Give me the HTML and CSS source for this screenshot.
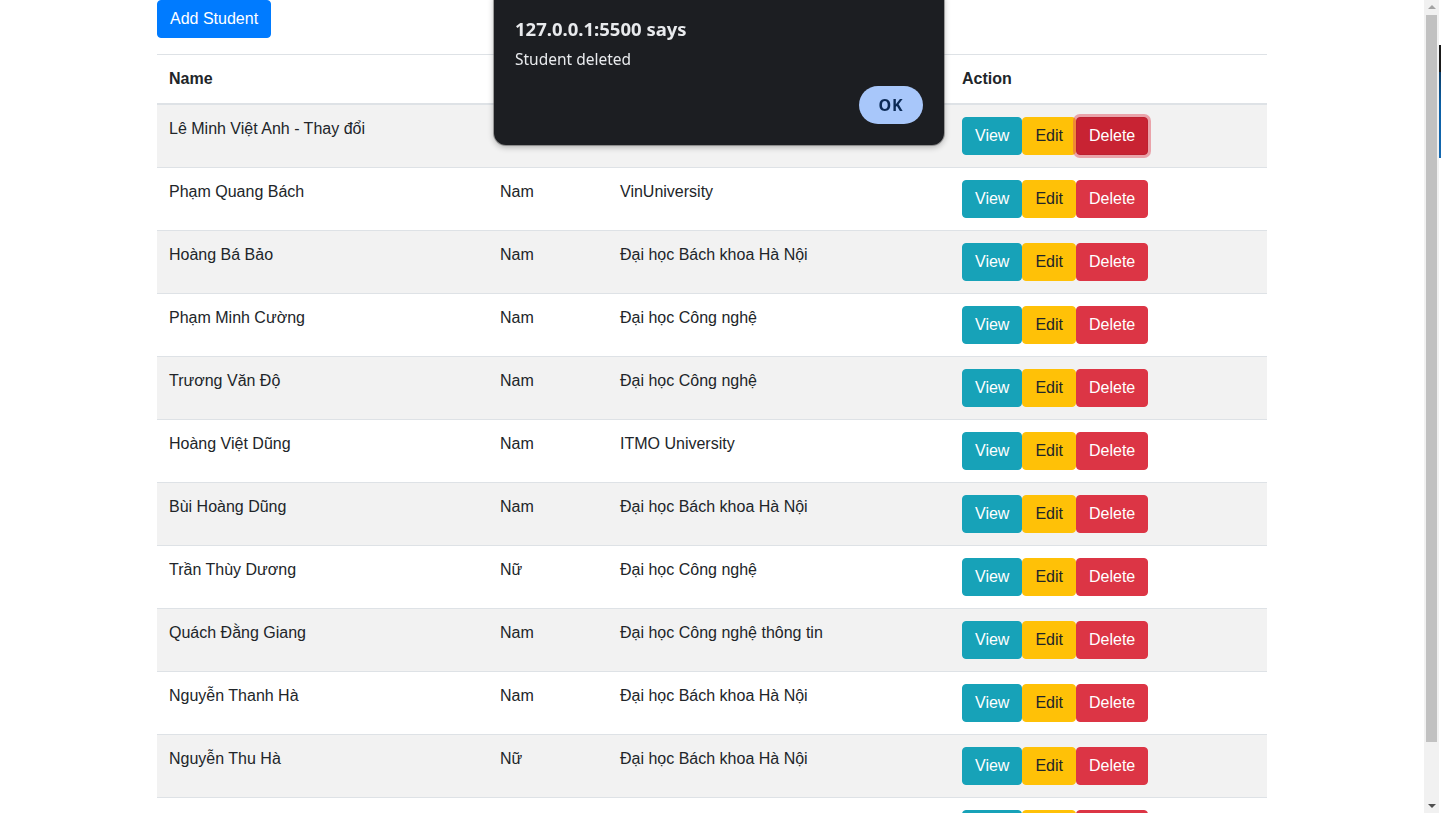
FILE: index.html
```html
<!DOCTYPE html>
<html lang="vi">
<head>
<meta charset="utf-8">
<title>Students</title>
<link rel="stylesheet" href="styles.css">
</head>
<body>
<div class="viewport">
  <main class="page">
    <div class="container">
      <button class="btn btn-primary add-btn">Add Student</button>
      <table class="table">
        <colgroup>
          <col class="c-name"><col class="c-gender"><col class="c-uni"><col class="c-action">
        </colgroup>
        <thead>
          <tr><th>Name</th><th>Gender</th><th>University</th><th>Action</th></tr>
        </thead>
        <tbody>
          <tr><td>Lê Minh Việt Anh - Thay đổi</td><td>Nam</td><td>Đại học Công nghệ</td><td><div class="actions"><button class="btn btn-info">View</button><button class="btn btn-warning">Edit</button><button class="btn btn-danger focused">Delete</button></div></td></tr>
          <tr><td>Phạm Quang Bách</td><td>Nam</td><td>VinUniversity</td><td><div class="actions"><button class="btn btn-info">View</button><button class="btn btn-warning">Edit</button><button class="btn btn-danger">Delete</button></div></td></tr>
          <tr><td>Hoàng Bá Bảo</td><td>Nam</td><td>Đại học Bách khoa Hà Nội</td><td><div class="actions"><button class="btn btn-info">View</button><button class="btn btn-warning">Edit</button><button class="btn btn-danger">Delete</button></div></td></tr>
          <tr><td>Phạm Minh Cường</td><td>Nam</td><td>Đại học Công nghệ</td><td><div class="actions"><button class="btn btn-info">View</button><button class="btn btn-warning">Edit</button><button class="btn btn-danger">Delete</button></div></td></tr>
          <tr><td>Trương Văn Độ</td><td>Nam</td><td>Đại học Công nghệ</td><td><div class="actions"><button class="btn btn-info">View</button><button class="btn btn-warning">Edit</button><button class="btn btn-danger">Delete</button></div></td></tr>
          <tr><td>Hoàng Việt Dũng</td><td>Nam</td><td>ITMO University</td><td><div class="actions"><button class="btn btn-info">View</button><button class="btn btn-warning">Edit</button><button class="btn btn-danger">Delete</button></div></td></tr>
          <tr><td>Bùi Hoàng Dũng</td><td>Nam</td><td>Đại học Bách khoa Hà Nội</td><td><div class="actions"><button class="btn btn-info">View</button><button class="btn btn-warning">Edit</button><button class="btn btn-danger">Delete</button></div></td></tr>
          <tr><td>Trần Thùy Dương</td><td>Nữ</td><td>Đại học Công nghệ</td><td><div class="actions"><button class="btn btn-info">View</button><button class="btn btn-warning">Edit</button><button class="btn btn-danger">Delete</button></div></td></tr>
          <tr><td>Quách Đằng Giang</td><td>Nam</td><td>Đại học Công nghệ thông tin</td><td><div class="actions"><button class="btn btn-info">View</button><button class="btn btn-warning">Edit</button><button class="btn btn-danger">Delete</button></div></td></tr>
          <tr><td>Nguyễn Thanh Hà</td><td>Nam</td><td>Đại học Bách khoa Hà Nội</td><td><div class="actions"><button class="btn btn-info">View</button><button class="btn btn-warning">Edit</button><button class="btn btn-danger">Delete</button></div></td></tr>
          <tr><td>Nguyễn Thu Hà</td><td>Nữ</td><td>Đại học Bách khoa Hà Nội</td><td><div class="actions"><button class="btn btn-info">View</button><button class="btn btn-warning">Edit</button><button class="btn btn-danger">Delete</button></div></td></tr>
          <tr><td>Lưu Thu Hương</td><td>Nữ</td><td>Đại học Công nghệ</td><td><div class="actions"><button class="btn btn-info">View</button><button class="btn btn-warning">Edit</button><button class="btn btn-danger">Delete</button></div></td></tr>
        </tbody>
      </table>
    </div>
  </main>

  <div class="scrollbar" aria-hidden="true">
    <div class="sb-arrow sb-up"></div>
    <div class="sb-track"><div class="sb-thumb"></div></div>
    <div class="sb-arrow sb-down"></div>
  </div>
  <div class="edge" aria-hidden="true"><div class="edge-win"></div></div>
</div>

<div class="dialog" role="alertdialog">
  <div class="dialog-title">127.0.0.1:5500 says</div>
  <div class="dialog-msg">Student deleted</div>
  <div class="dialog-foot"><button class="dialog-ok">OK</button></div>
</div>
</body>
</html>
```

FILE: styles.css
```css
*, *::before, *::after { box-sizing: border-box; }

html, body { margin: 0; height: 100%; overflow: hidden; }

body {
  font-family: "Liberation Sans", Arial, sans-serif;
  font-size: 16px;
  line-height: 1.5;
  color: #212529;
  background: #fff;
}

.viewport {
  display: flex;
  height: 100vh;
}

.page {
  flex: 1;
  min-width: 0;
  overflow: hidden;
}

.container {
  width: 1140px;
  padding: 0 15px;
  margin: 0 auto;
}

.btn {
  display: inline-block;
  font-family: inherit;
  font-size: 16px;
  line-height: 24px;
  padding: 6px 12px;
  border: 1px solid transparent;
  border-radius: 4px;
  cursor: pointer;
  margin: 0;
}

.btn-primary { background: #007bff; border-color: #007bff; color: #fff; }
.btn-info { background: #17a2b8; border-color: #17a2b8; color: #fff; }
.btn-warning { background: #ffc107; border-color: #ffc107; color: #212529; }
.btn-danger { background: #dc3545; border-color: #dc3545; color: #fff; }
.btn-danger.focused {
  background: #c82333;
  border-color: #bd2130;
  box-shadow: 0 0 0 3px rgba(225, 83, 97, 0.5);
  position: relative;
}

.add-btn { display: block; }

.table {
  width: 100%;
  margin: 16px 0 16px;
  border-collapse: collapse;
  table-layout: fixed;
}

.c-name { width: 331px; }
.c-gender { width: 120px; }
.c-uni { width: 342px; }
.c-action { width: 317px; }

.table th, .table td {
  padding: 12px;
  text-align: left;
  vertical-align: top;
  border-top: 1px solid #dee2e6;
}

.table thead th {
  font-weight: 700;
  vertical-align: bottom;
  border-bottom: 2px solid #dee2e6;
}

.table tbody tr:nth-child(odd) { background: #f2f2f2; }

.actions { display: flex; }

/* classic scrollbar drawn beside the page */
.scrollbar {
  width: 15px;
  flex: none;
  display: flex;
  flex-direction: column;
  background: #f1f1f1;
}

.sb-arrow {
  height: 15px;
  flex: none;
  display: flex;
  align-items: center;
  justify-content: center;
}

.sb-up::before {
  content: "";
  border-left: 4px solid transparent;
  border-right: 4px solid transparent;
  border-bottom: 4px solid #a3a3a3;
  margin-bottom: 1px;
}

.sb-down::before {
  content: "";
  border-left: 4px solid transparent;
  border-right: 4px solid transparent;
  border-top: 4px solid #505050;
  margin-top: 1px;
}

.sb-track {
  flex: 1;
  padding: 0 2px;
}

.sb-thumb {
  height: 727px;
  background: #c1c1c1;
}

.edge {
  width: 2px;
  flex: none;
  padding-top: 45px;
  background: #fff;
}

.edge-win {
  height: 113px;
  background: linear-gradient(#1a1a1a 0 27px, #0c3d66 27px, #0b5fa5 60px, #1669b0);
}

/* browser alert dialog */
.dialog {
  position: fixed;
  left: 494px;
  top: -12px;
  width: 450px;
  padding: 30px 21px 21px 21px;
  background: #1c1e22;
  border-radius: 12px;
  box-shadow: 0 0 0 1px rgba(90, 90, 90, 0.5), 0 2px 6px rgba(0, 0, 0, 0.3);
  color: #e8eaed;
  font-family: "Noto Sans", "Open Sans", sans-serif;
}

.dialog-title {
  font-size: 18.5px;
  font-weight: 700;
  line-height: 22px;
}

.dialog-msg {
  font-size: 15.5px;
  line-height: 20px;
  margin-top: 9px;
}

.dialog-foot {
  display: flex;
  justify-content: flex-end;
  margin-top: 17px;
}

.dialog-ok {
  width: 64px;
  height: 38px;
  border: none;
  border-radius: 19px;
  background: #a8c7fa;
  color: #0b2a55;
  font-family: "Noto Sans", "Open Sans", sans-serif;
  font-weight: 700;
  font-size: 16px;
  letter-spacing: 0.8px;
}
```
